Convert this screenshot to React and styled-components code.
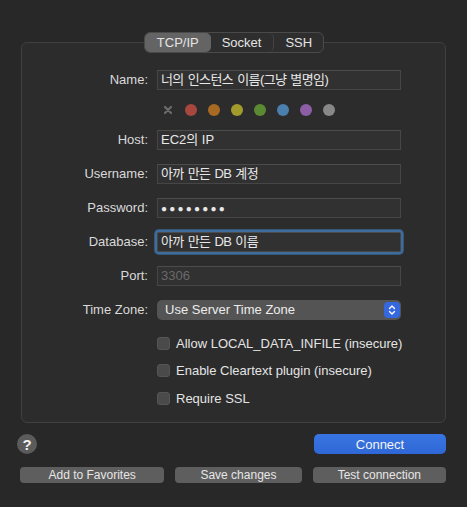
import React from "react";
import styled, { createGlobalStyle } from "styled-components";

const GlobalStyle = createGlobalStyle`
    body {
        margin: 0;
        background: #282828;
        font-family: "Liberation Sans", "Noto Sans CJK KR", sans-serif;
        -webkit-font-smoothing: antialiased;
    }
`

const labels = ["#a8473e", "#a86a22", "#a39a2c", "#5c8a32", "#4a7fae", "#8c5ea6", "#888888"]

const fields = [
    { label: "Host:", value: "EC2의 IP" },
    { label: "Username:", value: "아까 만든 DB 계정", tight: true },
    { label: "Password:", value: "●●●●●●●●", secret: true },
    { label: "Database:", value: "아까 만든 DB 이름", focused: true, tight: true },
    { label: "Port:", value: "3306", placeholder: true },
]

const options = [
    "Allow LOCAL_DATA_INFILE (insecure)",
    "Enable Cleartext plugin (insecure)",
    "Require SSL",
]

export default function App() {
    return (
        <Page>
            <GlobalStyle />
            <Panel>
                <Tabs>
                    <Tab active>TCP/IP</Tab>
                    <Tab divider>Socket</Tab>
                    <Tab>SSH</Tab>
                </Tabs>
                <Form>
                    <Label>Name:</Label>
                    <Field tight>너의 인스턴스 이름(그냥 별명임)</Field>

                    <span />
                    <Swatches>
                        <Clear>
                            <svg width="10" height="10" viewBox="0 0 10 10">
                                <path d="M2 2 L8 8 M8 2 L2 8" stroke="#6c6c6c" strokeWidth="2.2" strokeLinecap="round" />
                            </svg>
                        </Clear>
                        {labels.map(c => <Dot key={c} color={c} />)}
                    </Swatches>

                    {fields.map(f => (
                        <React.Fragment key={f.label}>
                            <Label>{f.label}</Label>
                            <Field
                                focused={f.focused}
                                placeholder={f.placeholder}
                                secret={f.secret}
                                tight={f.tight}
                            >
                                {f.value}
                            </Field>
                        </React.Fragment>
                    ))}

                    <Label>Time Zone:</Label>
                    <Popup>
                        Use Server Time Zone
                        <Stepper>
                            <svg width="8" height="12" viewBox="0 0 8 12">
                                <path d="M1.5 4.5 L4 2 L6.5 4.5 M1.5 7.5 L4 10 L6.5 7.5" fill="none" stroke="white" strokeWidth="1.4" strokeLinecap="round" strokeLinejoin="round" />
                            </svg>
                        </Stepper>
                    </Popup>
                </Form>
                <Checks>
                    {options.map(o => (
                        <Check key={o}>
                            <Box />
                            {o}
                        </Check>
                    ))}
                </Checks>
            </Panel>
            <ActionRow>
                <Help>?</Help>
                <Connect>Connect</Connect>
            </ActionRow>
            <ButtonRow>
                <SmallButton width={145}>Add to Favorites</SmallButton>
                <SmallButton width={127}>Save changes</SmallButton>
                <SmallButton width={134}>Test connection</SmallButton>
            </ButtonRow>
        </Page>
    );
}

const Page = styled.div`
    width: 467px;
    height: 507px;
    padding: 42px 21px 0 21px;
    box-sizing: border-box;
    background: #282828;
    overflow: hidden;
`

const Panel = styled.div`
    width: 425px;
    height: 381px;
    box-sizing: border-box;
    border: 1px solid #404040;
    border-radius: 6px;
    background: #2c2c2c;
    display: flex;
    flex-direction: column;
    align-items: center;
`

const Tabs = styled.div`
    margin-top: -11px;
    margin-left: 1px;
    display: flex;
    height: 21px;
    box-sizing: border-box;
    border: 1px solid #4a4a4a;
    border-radius: 6px;
    background: #2e2e2e;
`

const Tab = styled.div`
    height: 19px;
    padding: 0 ${p => (p.divider ? "12px 0 11px" : p.active ? "12px" : "11px")};
    display: flex;
    align-items: center;
    border-radius: 5px;
    font-size: 13px;
    color: #e4e4e4;
    background: ${p => (p.active ? "#646464" : "transparent")};
    border-right: ${p => (p.divider ? "1px solid #444" : "none")};
`

const Form = styled.div`
    align-self: stretch;
    margin-top: 17px;
    display: grid;
    grid-template-columns: 126px 244px;
    grid-template-rows: 20px 12px;
    grid-auto-rows: 20px;
    column-gap: 9px;
    row-gap: 14px;
`

const Label = styled.div`
    font-size: 13px;
    color: #dadada;
    text-align: right;
    line-height: 20px;
`

const Field = styled.div`
    box-sizing: border-box;
    height: 20px;
    padding: 0 3px;
    border: 1px solid #464646;
    border-top-color: #4c4c4c;
    background: #313131;
    color: ${p => (p.placeholder ? "#6a6a6a" : "#e8e8e8")};
    font-size: ${p => (p.secret ? "10px" : "13px")};
    letter-spacing: ${p => (p.secret ? "2.2px" : p.tight ? "-0.6px" : "0")};
    word-spacing: ${p => (p.tight ? "1px" : "0")};
    line-height: ${p => (p.secret ? "20px" : "18px")};
    white-space: nowrap;
    box-shadow: ${p => (p.focused ? "0 0 0 2px #3e6c9c, 0 0 0 3px #35577a" : "none")};
    border-radius: ${p => (p.focused ? "2px" : "0")};
`

const Swatches = styled.div`
    display: flex;
    align-items: center;
    gap: 11px;
    padding-left: 5px;
    height: 12px;
`

const Clear = styled.span`
    width: 12px;
    height: 12px;
    display: flex;
    align-items: center;
    justify-content: center;
`

const Dot = styled.span`
    width: 12px;
    height: 12px;
    border-radius: 50%;
    background: ${p => p.color};
`

const Popup = styled.div`
    box-sizing: border-box;
    height: 20px;
    border-radius: 5px;
    background: #545454;
    color: #ececec;
    font-size: 13px;
    line-height: 20px;
    padding-left: 8px;
    display: flex;
    justify-content: space-between;
    align-items: center;
`

const Stepper = styled.span`
    width: 16px;
    height: 16px;
    margin-right: 1px;
    border-radius: 4px;
    background: #3567df;
    display: flex;
    align-items: center;
    justify-content: center;
`

const Checks = styled.div`
    align-self: stretch;
    padding-left: 135px;
    margin-top: 16px;
    display: flex;
    flex-direction: column;
    gap: 13px;
`

const Check = styled.div`
    display: flex;
    align-items: center;
    gap: 6px;
    height: 14px;
    font-size: 13px;
    color: #e4e4e4;
    &:nth-child(3) { margin-top: 1px; }
`

const Box = styled.span`
    width: 13px;
    height: 13px;
    box-sizing: border-box;
    border-radius: 3px;
    background: #4a4a4a;
    border: 1px solid #555;
`

const ActionRow = styled.div`
    margin-top: 11px;
    margin-left: -4px;
    display: flex;
    justify-content: space-between;
    align-items: center;
    width: 429px;
`

const Help = styled.div`
    width: 20px;
    height: 20px;
    border-radius: 50%;
    background: #5b5b5b;
    color: #f0f0f0;
    font-size: 15px;
    font-weight: bold;
    display: flex;
    align-items: center;
    justify-content: center;
`

const Connect = styled.div`
    width: 132px;
    height: 20px;
    border-radius: 5px;
    background: linear-gradient(#3875e2, #2f68d6);
    color: #f4f4f4;
    font-size: 13px;
    display: flex;
    align-items: center;
    justify-content: center;
`

const ButtonRow = styled.div`
    margin-top: 13px;
    margin-left: -1px;
    display: flex;
    gap: 11px;
`

const SmallButton = styled.div`
    width: ${p => p.width}px;
    height: 16px;
    border-radius: 4px;
    background: #5e5e5e;
    color: #e6e6e6;
    font-size: 12px;
    display: flex;
    align-items: center;
    justify-content: center;
`
